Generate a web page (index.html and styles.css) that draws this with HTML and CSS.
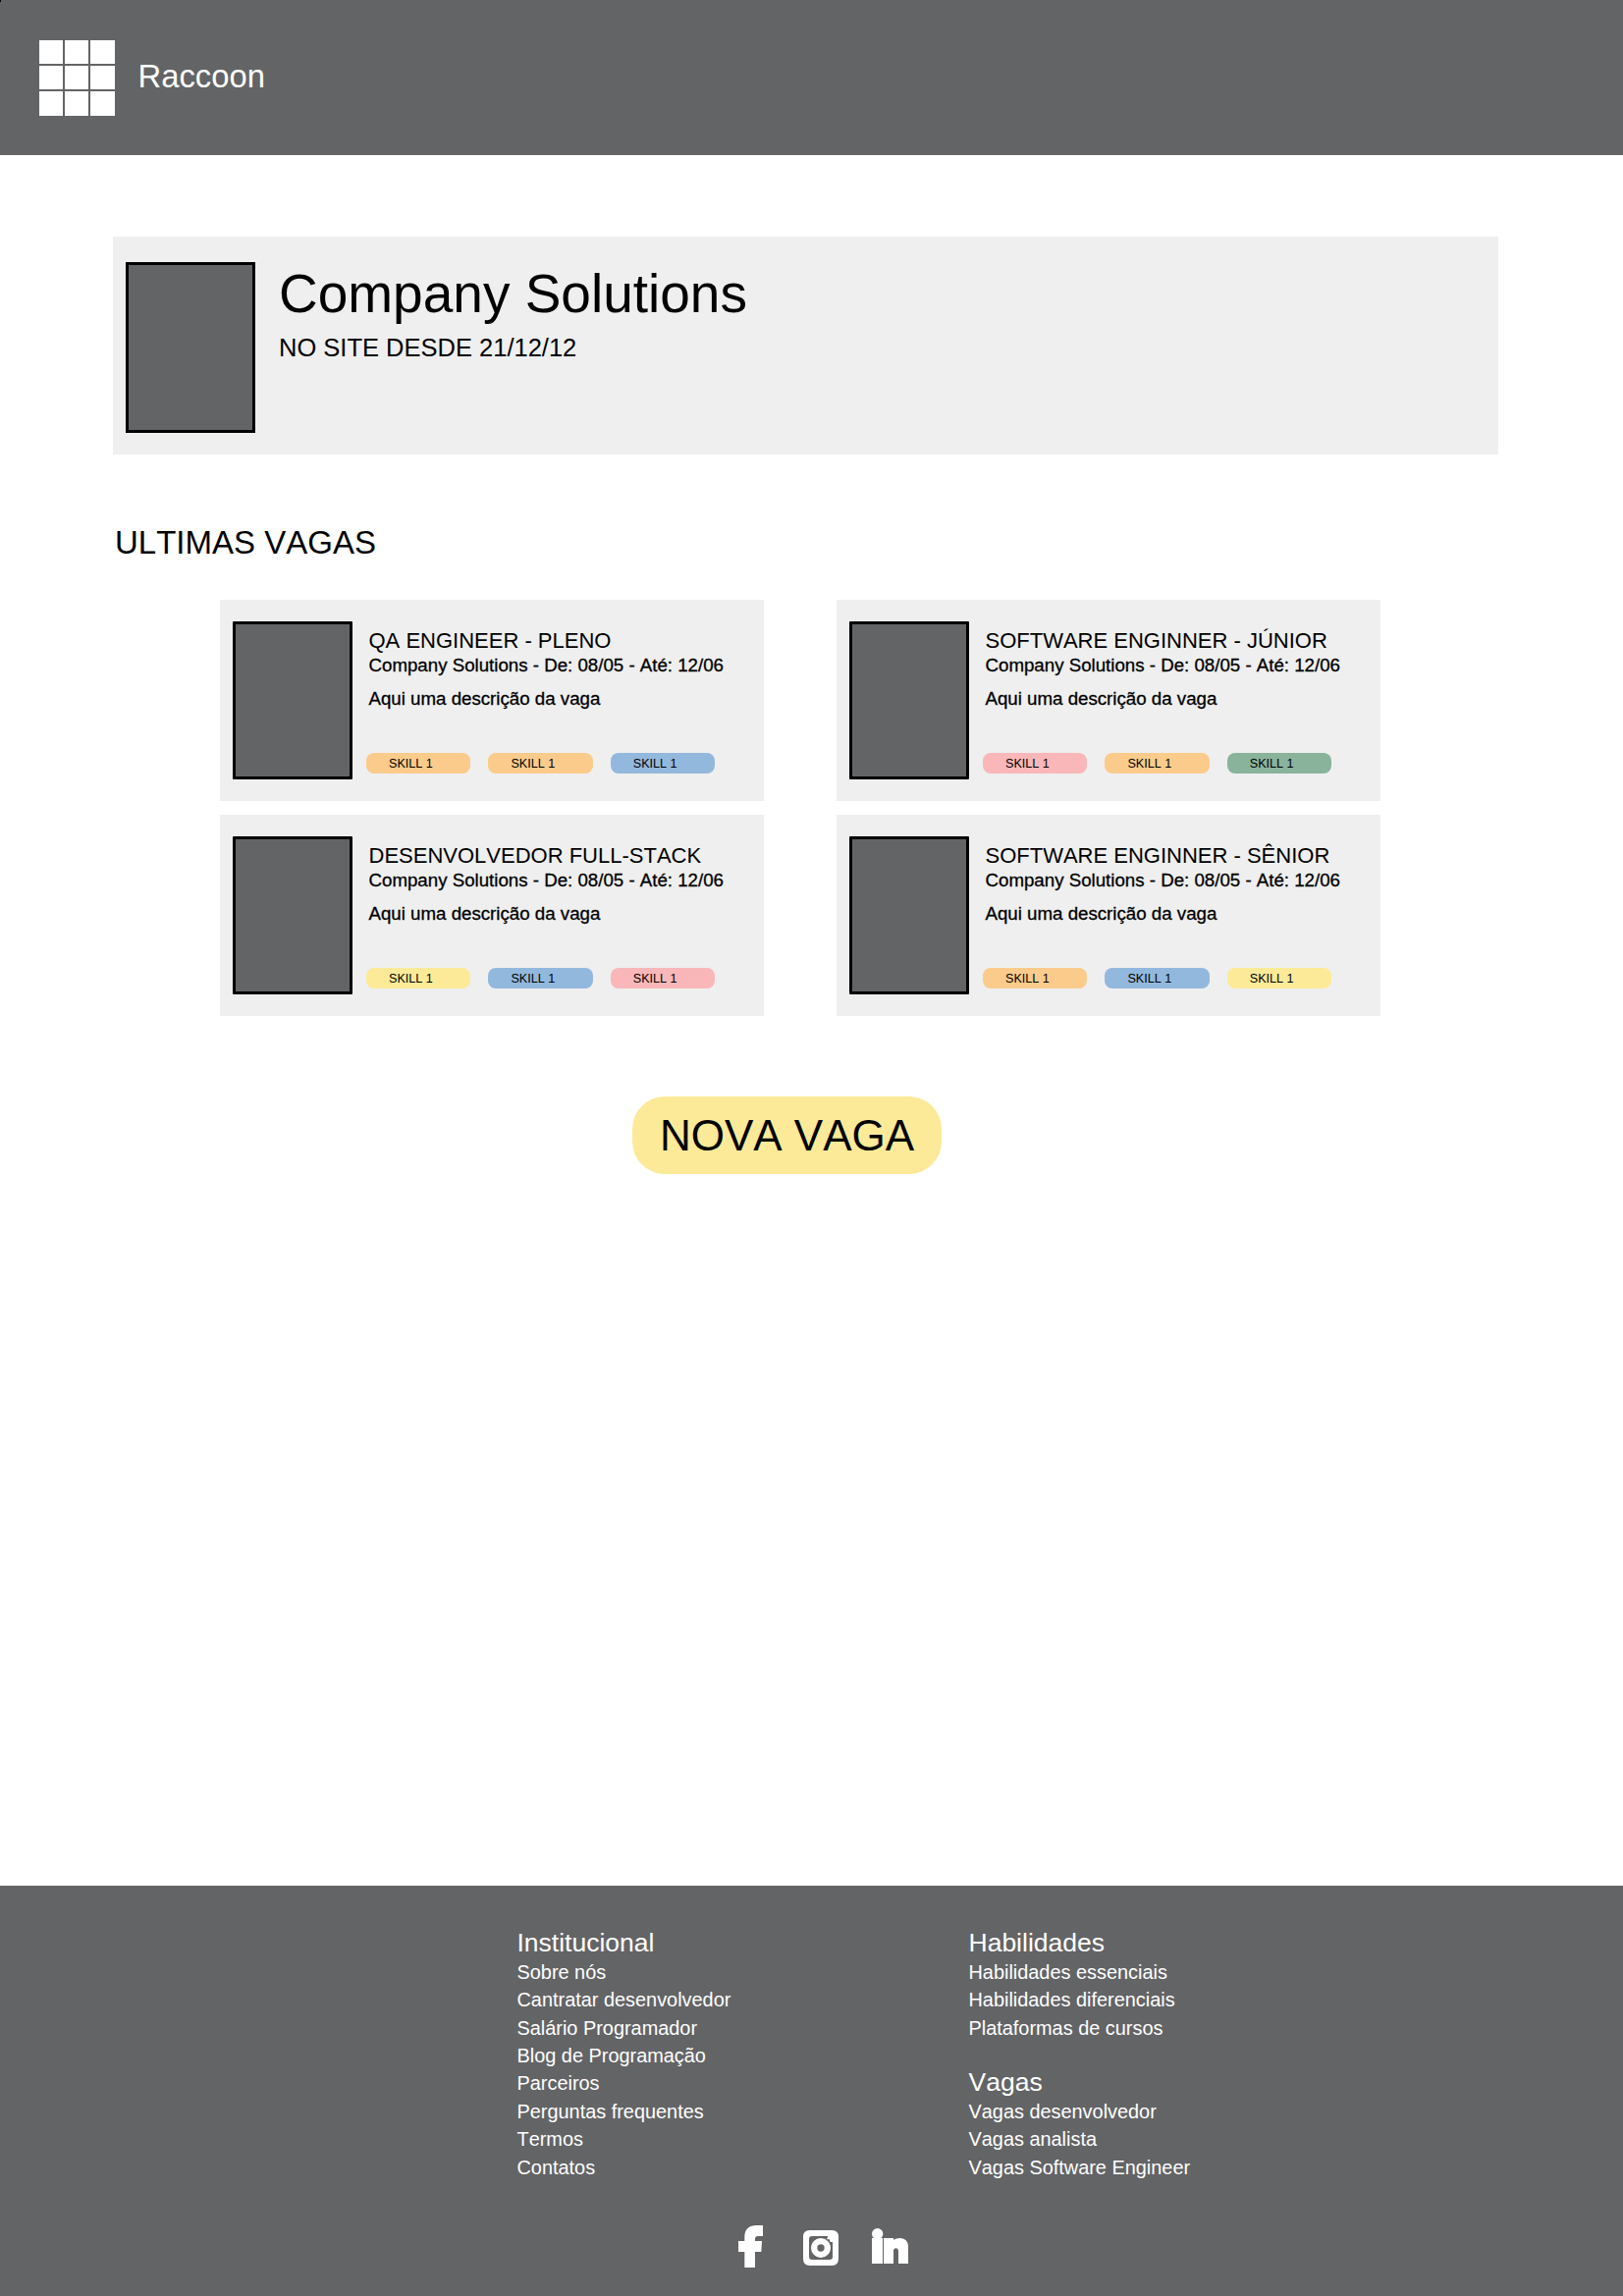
FILE: index.html
```html
<!DOCTYPE html>
<html lang="pt-BR">
<head>
<meta charset="utf-8">
<title>Raccoon</title>
<link rel="stylesheet" href="styles.css">
</head>
<body>
<header class="topbar">
  <div class="logo"><i></i><i></i><i></i><i></i><i></i><i></i><i></i><i></i><i></i></div>
  <span class="brand">Raccoon</span>
</header>
<main>
  <section class="company">
    <div class="company-photo"></div>
    <div class="company-info">
      <h1>Company Solutions</h1>
      <p>NO SITE DESDE 21/12/12</p>
    </div>
  </section>
  <h2 class="section-title">ULTIMAS VAGAS</h2>
  <section class="jobs">
    <article class="job">
      <div class="job-photo"></div>
      <div class="job-body">
        <h3>QA ENGINEER - PLENO</h3>
        <p class="meta">Company Solutions - De: 08/05 - Até: 12/06</p>
        <p class="desc">Aqui uma descrição da vaga</p>
        <div class="tags"><span class="tag orange">SKILL 1</span><span class="tag orange">SKILL 1</span><span class="tag blue">SKILL 1</span></div>
      </div>
    </article>
    <article class="job">
      <div class="job-photo"></div>
      <div class="job-body">
        <h3>SOFTWARE ENGINNER - JÚNIOR</h3>
        <p class="meta">Company Solutions - De: 08/05 - Até: 12/06</p>
        <p class="desc">Aqui uma descrição da vaga</p>
        <div class="tags"><span class="tag pink">SKILL 1</span><span class="tag orange">SKILL 1</span><span class="tag green">SKILL 1</span></div>
      </div>
    </article>
    <article class="job">
      <div class="job-photo"></div>
      <div class="job-body">
        <h3>DESENVOLVEDOR FULL-STACK</h3>
        <p class="meta">Company Solutions - De: 08/05 - Até: 12/06</p>
        <p class="desc">Aqui uma descrição da vaga</p>
        <div class="tags"><span class="tag yellow">SKILL 1</span><span class="tag blue">SKILL 1</span><span class="tag pink">SKILL 1</span></div>
      </div>
    </article>
    <article class="job">
      <div class="job-photo"></div>
      <div class="job-body">
        <h3>SOFTWARE ENGINNER - SÊNIOR</h3>
        <p class="meta">Company Solutions - De: 08/05 - Até: 12/06</p>
        <p class="desc">Aqui uma descrição da vaga</p>
        <div class="tags"><span class="tag orange">SKILL 1</span><span class="tag blue">SKILL 1</span><span class="tag yellow">SKILL 1</span></div>
      </div>
    </article>
  </section>
  <button class="new-job" type="button">NOVA VAGA</button>
</main>
<footer class="footer">
  <div class="footer-cols">
    <div class="footer-col">
      <h4>Institucional</h4>
      <ul>
        <li>Sobre nós</li>
        <li>Cantratar desenvolvedor</li>
        <li>Salário Programador</li>
        <li>Blog de Programação</li>
        <li>Parceiros</li>
        <li>Perguntas frequentes</li>
        <li>Termos</li>
        <li>Contatos</li>
      </ul>
    </div>
    <div class="footer-col">
      <h4>Habilidades</h4>
      <ul>
        <li>Habilidades essenciais</li>
        <li>Habilidades diferenciais</li>
        <li>Plataformas de cursos</li>
      </ul>
      <h4 class="spaced">Vagas</h4>
      <ul>
        <li>Vagas desenvolvedor</li>
        <li>Vagas analista</li>
        <li>Vagas Software Engineer</li>
      </ul>
    </div>
  </div>
  <div class="social">
    <svg class="facebook" viewBox="0 0 75 129" fill="#fff"><path d="M19 129V81H0V48H19V36C19 13 32 0 54 0H75V33H60Q51 33 51 41V48H72L70 81H51V129Z"/></svg>
    <svg class="instagram" viewBox="0 0 108 108"><path fill="#fff" fill-rule="evenodd" d="M20 0H88Q108 0 108 20V88Q108 108 88 108H20Q0 108 0 88V20Q0 0 20 0ZM27 18Q18 18 18 27V81Q18 90 27 90H81Q90 90 90 81V36H82L81 28H72L76 18Z"/><circle cx="54" cy="54" r="20.5" fill="none" stroke="#fff" stroke-width="19"/></svg>
    <svg class="linkedin" viewBox="0 0 111 108" fill="#fff"><circle cx="17" cy="17" r="17"/><path d="M0 30H33V108H0ZM36 30H66V35Q74 30 87 30Q111 32 111 57V108H81V68Q80 61 73 61Q66 62 66 69V108H36Z"/></svg>
  </div>
</footer>
</body>
</html>
```
FILE: styles.css
```css
* { box-sizing: border-box; }

body {
  margin: 0;
  min-height: 2339px;
  display: flex;
  flex-direction: column;
  background: #fff;
  color: #000;
  font-family: "Liberation Sans", Arial, sans-serif;
  font-kerning: none;
}

h1, h2, h3, h4, p, ul { margin: 0; padding: 0; font-weight: 400; }
li { list-style: none; }

.topbar {
  height: 158px;
  padding: 1px 0 0 40px;
  display: flex;
  align-items: center;
  gap: 23.5px;
  background: linear-gradient(#000, #000) 0 0 / 1px 2px no-repeat #636466;
  color: #fff;
}
.logo {
  display: grid;
  grid-template-columns: 24px 24px 25px;
  grid-template-rows: 24px 24px 25px;
  gap: 2px;
}
.logo i { background: #fff; }
.brand { font-size: 32.8px; line-height: 38px; margin-bottom: 4px; }

main { flex: 1; }

.company {
  margin: 83px 127px 0 115px;
  height: 222px;
  padding: 26px 13px;
  display: flex;
  align-items: flex-start;
  gap: 24px;
  background: #efefef;
}
.company-photo {
  width: 132px;
  height: 174px;
  background: #636466;
  border: 3px solid #000;
}
.company-info { padding-top: 2px; }
.company-info h1 { font-size: 55px; line-height: 60px; }
.company-info p { margin-top: 10px; font-size: 25.5px; line-height: 30px; }

.section-title {
  margin: 70px 0 0 117px;
  font-size: 33px;
  line-height: 40px;
}

.jobs {
  margin: 38px 0 0 224px;
  display: grid;
  grid-template-columns: 554px 554px;
  grid-auto-rows: 205px;
  gap: 14px 74px;
}
.job {
  padding: 22px 13px;
  display: flex;
  align-items: flex-start;
  gap: 14px;
  background: #efefef;
}
.job-photo {
  flex: none;
  width: 122px;
  height: 161px;
  background: #636466;
  border: 3px solid #000;
  border-radius: 1px;
}
.job-body { padding-top: 8px; }
.job-body h3, .meta, .desc { padding-left: 2.5px; line-height: 24px; white-space: nowrap; }
.job-body h3 { font-size: 22px; }
.meta, .desc { font-size: 18.7px; -webkit-text-stroke: 0.3px #000; }
.meta { margin-top: 1px; }
.desc { margin-top: 10px; }

.tags { margin-top: 43px; display: flex; gap: 18px; }
.tag {
  width: 106.4px;
  height: 21px;
  padding-left: 23px;
  border-radius: 8px;
  font-size: 12.6px;
  line-height: 22px;
}
.orange { background: #fbcb8c; }
.blue { background: #93b8dd; }
.pink { background: #f9b7b9; }
.green { background: #8ab39b; }
.yellow { background: #fcea99; }

.new-job {
  display: block;
  width: 315px;
  height: 79px;
  margin: 82px 0 0 644px;
  padding: 0;
  border: 0;
  border-radius: 33px;
  background: #fcea99;
  color: #000;
  font-family: inherit;
  font-kerning: none;
  font-size: 44px;
  line-height: 79px;
}

.footer {
  height: 418px;
  padding-top: 44px;
  background: #636466;
  color: #fff;
}
.footer-cols {
  display: grid;
  grid-template-columns: 460px 400px;
  padding-left: 526.5px;
  line-height: 28.4px;
}
.footer-col h4 { font-size: 26.5px; line-height: 29.8px; }
.footer-col .spaced { margin-top: 27px; }
.footer-col li { font-size: 19.9px; }

.social {
  margin: 44.6px 0 0 752px;
  display: flex;
  align-items: flex-start;
}
.social svg { display: block; }
.facebook { width: 25px; height: 43px; }
.instagram { width: 36px; height: 36px; margin: 5px 0 0 41px; }
.linkedin { width: 37px; height: 36px; margin: 3px 0 0 34px; }
```
